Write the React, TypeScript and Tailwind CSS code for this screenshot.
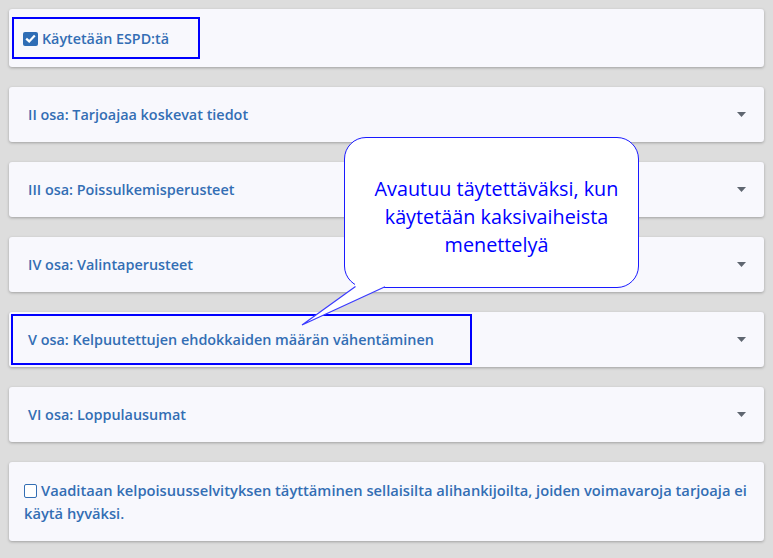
const sections = [
  'II osa: Tarjoajaa koskevat tiedot',
  'III osa: Poissulkemisperusteet',
  'IV osa: Valintaperusteet',
  'V osa: Kelpuutettujen ehdokkaiden määrän vähentäminen',
  'VI osa: Loppulausumat',
]

function Caret() {
  return (
    <svg width="9" height="5" viewBox="0 0 9 5" className="shrink-0">
      <path d="M0 0 H9 L4.5 5 Z" fill="#5f6670" />
    </svg>
  )
}

function Card({ children, className = '' }: { children: React.ReactNode; className?: string }) {
  return (
    <div
      className={`rounded-[3px] bg-[#f8f8fd] shadow-[0_1px_3px_rgba(0,0,0,0.28)] ${className}`}
    >
      {children}
    </div>
  )
}

export default function App() {
  return (
    <div
      className="relative h-[558px] w-[773px] overflow-hidden bg-[#dddddd] px-[9px] pt-[9px] text-[#336eb4]"
      style={{ fontFamily: '"Open Sans", "Noto Sans", sans-serif' }}
    >
      <div className="flex flex-col gap-5">
        <Card className="h-[58px]">
          <div className="flex h-full items-center pl-[14px] pt-[1px]">
            <span className="flex h-[14px] w-[15px] items-center justify-center rounded-[2px] bg-[#2f6db5]">
              <svg width="11" height="9" viewBox="0 0 11 9">
                <path d="M1.2 4.6 L4.2 7.4 L9.8 1.6" fill="none" stroke="#fff" strokeWidth="2.2" />
              </svg>
            </span>
            <span className="ml-[4px] text-[14.3px] font-semibold">Käytetään ESPD:tä</span>
          </div>
        </Card>

        {sections.map((title) => (
          <Card key={title} className="h-[55px]">
            <div className="flex h-full items-center justify-between pl-[19px] pr-[18px]">
              <span className="text-[14.4px] font-semibold">{title}</span>
              <Caret />
            </div>
          </Card>
        ))}

        <Card className="h-[79px]">
          <div className="flex h-full items-center pl-[15px] pr-[8px] pt-[1px]">
            <p className="text-[14.7px] font-semibold leading-[23px]">
              <span className="mr-[4px] inline-block h-[14px] w-[13px] rounded-[2px] border-[1.5px] border-[#336eb4] bg-white align-[-2px]" />
              Vaaditaan kelpoisuusselvityksen täyttäminen sellaisilta alihankijoilta, joiden voimavaroja tarjoaja ei käytä hyväksi.
            </p>
          </div>
        </Card>
      </div>

      {/* annotation: ESPD checkbox */}
      <div className="pointer-events-none absolute left-[12px] top-[17px] h-[42px] w-[188px] border-2 border-[#0000ff]" />

      {/* annotation: V osa */}
      <div className="pointer-events-none absolute left-[11px] top-[314px] h-[51px] w-[461px] border-2 border-[#0000ff]" />

      {/* speech bubble */}
      <div className="absolute left-[344px] top-[137px] flex h-[151px] w-[295px] justify-center rounded-[22px] border-[1.5px] border-[#1a1aff] bg-white pl-[10px] pt-[37px]">
        <p className="text-center text-[19.8px] leading-[28px] text-[#0000ff]">
          Avautuu täytettäväksi, kun
          <br />
          käytetään kaksivaiheista
          <br />
          menettelyä
        </p>
      </div>
      <svg
        className="absolute left-[300px] top-[282px]"
        width="90"
        height="46"
        viewBox="0 0 90 46"
      >
        <path d="M55 0 L55 4.5 L2 43 L85 4.8 L85 0 Z" fill="#fff" />
        <path d="M55.5 4.5 L2 43 L85 4.8" fill="none" stroke="#3a3aff" strokeWidth="1.2" />
      </svg>
    </div>
  )
}
